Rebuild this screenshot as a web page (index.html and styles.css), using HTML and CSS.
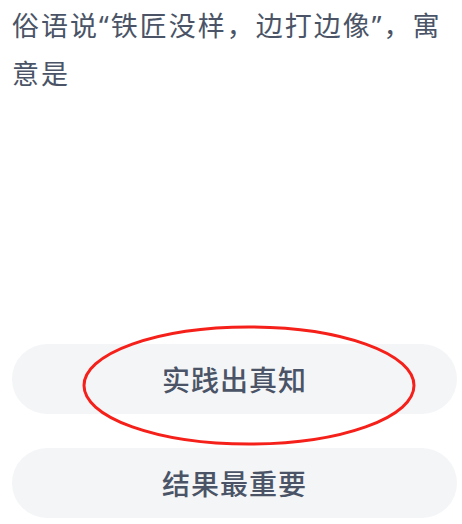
FILE: index.html
```html
<!DOCTYPE html>
<html lang="zh-CN">
<head>
<meta charset="utf-8">
<link rel="stylesheet" href="styles.css">
</head>
<body>
<main class="page">
  <p class="question">俗语说“铁匠没样，边打边像”，寓意是</p>
  <div class="options">
    <div class="option">实践出真知</div>
    <div class="option">结果最重要</div>
  </div>
  <svg class="mark" width="462" height="524" viewBox="0 0 462 524" aria-hidden="true">
    <ellipse cx="249" cy="385.5" rx="165" ry="58.5" fill="none" stroke="#f5201a" stroke-width="3"/>
  </svg>
</main>
</body>
</html>
```

FILE: styles.css
```css
html, body {
  margin: 0;
  padding: 0;
  background: #ffffff;
}
.page {
  position: relative;
  width: 462px;
  height: 524px;
  display: flex;
  flex-direction: column;
  font-family: "Noto Sans CJK SC", "Noto Sans", sans-serif;
}
.question {
  margin: 0;
  padding: 2px 8px 0 12px;
  font-family: "Noto Sans", "Noto Sans CJK SC", sans-serif;
  font-size: 27px;
  line-height: 48px;
  letter-spacing: 2px;
  color: #4a5466;
}
.options {
  margin-top: auto;
  margin-bottom: 6px;
  padding: 0 5px 0 12px;
  display: flex;
  flex-direction: column;
  gap: 34px;
}
.option {
  height: 70px;
  border-radius: 35px;
  background: #f4f5f7;
  display: flex;
  align-items: center;
  justify-content: center;
  font-size: 28px;
  font-weight: 500;
  letter-spacing: 1px;
  color: #4a5466;
}
.mark {
  position: absolute;
  left: 0;
  top: 0;
  pointer-events: none;
}
```
